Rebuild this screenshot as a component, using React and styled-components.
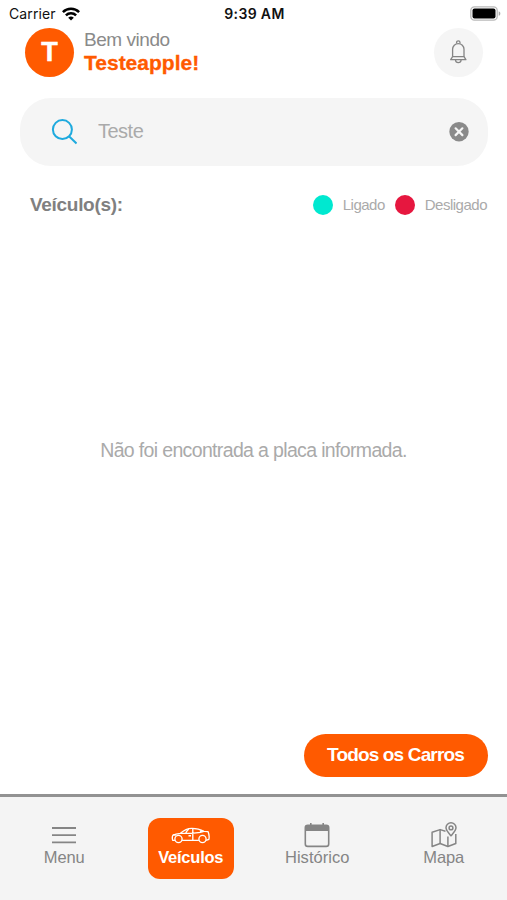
import styled, { createGlobalStyle } from "styled-components";

const GlobalStyle = createGlobalStyle`
    * {
        box-sizing: border-box;
    }

    body {
        margin: 0;
        background: #fff;
        font-family: "Liberation Sans", Arial, sans-serif;
    }
`

const App = () => {
    return (
        <Screen>
            <GlobalStyle />
            <StatusBar>
                <Carrier>
                    Carrier
                    <WifiIcon />
                </Carrier>
                <Clock>9:39 AM</Clock>
                <BatterySlot>
                    <BatteryIcon />
                </BatterySlot>
            </StatusBar>
            <Header>
                <Avatar>T</Avatar>
                <Greeting>
                    <Welcome>Bem vindo</Welcome>
                    <UserName>Testeapple!</UserName>
                </Greeting>
                <BellButton aria-label="Notificações">
                    <BellIcon />
                </BellButton>
            </Header>
            <SearchBox>
                <SearchIcon />
                <SearchInput type="text" defaultValue="Teste" />
                <ClearButton aria-label="Limpar">
                    <ClearIcon />
                </ClearButton>
            </SearchBox>
            <ListHeader>
                <ListTitle>Veículo(s):</ListTitle>
                <Legend>
                    <Dot $color="#00e8d0" />
                    <LegendLabel>Ligado</LegendLabel>
                    <Dot $color="#e6173f" />
                    <LegendLabel>Desligado</LegendLabel>
                </Legend>
            </ListHeader>
            <Empty>Não foi encontrada a placa informada.</Empty>
            <Actions>
                <AllCars>Todos os Carros</AllCars>
            </Actions>
            <TabBar>
                <Tab>
                    <MenuIcon />
                    <TabLabel $spacing="-0.1px">Menu</TabLabel>
                </Tab>
                <Tab $active>
                    <CarIcon />
                    <TabLabel $spacing="-0.25px">Veículos</TabLabel>
                </Tab>
                <Tab>
                    <CalendarIcon />
                    <TabLabel $spacing="0.05px">Histórico</TabLabel>
                </Tab>
                <Tab>
                    <MapIcon />
                    <TabLabel $spacing="-0.1px">Mapa</TabLabel>
                </Tab>
            </TabBar>
        </Screen>
    )
}

const WifiIcon = () => (
    <svg width="18" height="14" viewBox="0 0 18 14" fill="none" stroke="#000" strokeWidth="2.5">
        <path d="M.9 5.2a11.5 11.5 0 0 1 16.2 0" />
        <path d="M3.9 8.4a7.2 7.2 0 0 1 10.2 0" />
        <path d="M9 13.6 6.2 10.8a4 4 0 0 1 5.6 0Z" fill="#000" stroke="none" />
    </svg>
)

const BatteryIcon = () => (
    <svg width="31" height="15" viewBox="0 0 31 15">
        <rect x=".8" y=".8" width="26.4" height="13.4" rx="3.6" fill="#fff" stroke="#b9b9b9" strokeWidth="1.3" />
        <rect x="2.5" y="2.6" width="23" height="9.8" rx="2" fill="#000" />
        <path d="M28.7 5.2c2.2.8 2.2 3.8 0 4.6Z" fill="#aaa" />
    </svg>
)

const BellIcon = () => (
    <svg width="18" height="24" viewBox="0 0 18 24" fill="none" stroke="#858585" strokeWidth="1.3">
        <path d="M6.600 3.600V2.500a1.700 1.700 0 0 1 3.400 0v1.100" />
        <path d="M2.600 16.700V9.300a5.700 5.700 0 0 1 11.400 0v7.400" />
        <path d="M2.600 16.700H14l1.900 3H.7Z" strokeLinejoin="round" />
        <path d="M5.500 20c.3 3.500 5.300 3.500 5.600 0" />
    </svg>
)

const SearchIcon = () => (
    <svg width="26" height="26" viewBox="0 0 26 26" fill="none" stroke="#1eaade" strokeWidth="2">
        <circle cx="11.400" cy="10.600" r="9.500" />
        <path d="m18 17.300 7.500 7.200" />
    </svg>
)

const ClearIcon = () => (
    <svg width="20" height="20" viewBox="0 0 20 20">
        <circle cx="10" cy="9.700" r="9.700" fill="#8a8a8a" />
        <path d="m6.600 6.300 6.800 6.800m0-6.800-6.800 6.800" stroke="#f5f5f5" strokeWidth="2.200" strokeLinecap="round" />
    </svg>
)

const MenuIcon = () => (
    <svg width="26" height="26" viewBox="0 0 26 26" stroke="#858585" strokeWidth="1.800">
        <path d="M1 6h24M1 13.200h24M1 20.400h24" />
    </svg>
)

const CarIcon = () => (
    <svg width="40" height="26" viewBox="0 0 40 26" fill="none" stroke="#fff" strokeWidth="1.350" strokeLinejoin="round">
        <circle cx="7.500" cy="17" r="3.600" />
        <circle cx="31.500" cy="17" r="3.600" />
        <path d="M3.900 18.300H1.700c-.6-2-.5-4 .3-5.300 2.300-1 5-1.400 7.500-1.700 3-2.900 6.100-5 11.400-5 5.300 0 8.700 1.100 12 3l4.200.4c1 2.500 1.400 4.800.8 7.600l-2.800 1M11.100 18.300h16.800" />
        <path d="M9.500 11.300c8.500.3 16.500.2 23.400-2M21.800 6.300v12M14.700 11.200c.7-1.800 1.700-3 3-4.300M29.200 10.500l1-2.200M17.500 13.700H20" />
        <path d="M2 13h3" />
    </svg>
)

const CalendarIcon = () => (
    <svg width="26" height="26" viewBox="0 0 26 26" fill="none" stroke="#858585" strokeWidth="1.600">
        <rect x="1.300" y="3.200" width="23.400" height="21.200" rx="2.500" />
        <path d="M1.300 8.900V5.700a2.500 2.500 0 0 1 2.500-2.500h18.400a2.500 2.500 0 0 1 2.500 2.500v3.200Z" fill="#858585" stroke="none" />
        <path d="M6.800 1v3M19.200 1v3" />
    </svg>
)

const MapIcon = () => (
    <svg width="26" height="26" viewBox="0 0 26 26" fill="none" stroke="#858585" strokeWidth="1.500" strokeLinejoin="round">
        <path d="M14.500 9.200 9.100 7.600 1.100 10.200v14.300l8-3 7.800 3 7.900-3V12" />
        <path d="M9.100 7.600v13.900M16.900 14.500v10" />
        <path d="M20 13.800c-2.700-3.300-5-5.500-5-8a5 5 0 0 1 10 0c0 2.500-2.300 4.700-5 8Z" />
        <circle cx="20" cy="5.900" r="1.900" />
    </svg>
)

const Screen = styled.main`
    display: flex;
    flex-direction: column;
    width: 100%;
    height: 900px;
    background: #fff;
    overflow: hidden;
`

const StatusBar = styled.div`
    display: grid;
    grid-template-columns: 1fr auto 1fr;
    align-items: center;
    height: 27px;
    padding: 0 6px 0 8px;
    font-family: Inter, sans-serif;
    font-size: 14px;
    color: #111;
`

const Carrier = styled.div`
    display: flex;
    align-items: center;
    gap: 6px;
    padding-left: 1px;
    letter-spacing: 0.1px;
`

const Clock = styled.div`
    font-weight: 600;
    letter-spacing: 0.35px;
`

const BatterySlot = styled.div`
    display: flex;
    justify-content: flex-end;
    padding-bottom: 1px;
`

const Header = styled.header`
    display: flex;
    align-items: center;
    height: 50px;
    padding: 0 24px 0 25px;
`

const Avatar = styled.div`
    display: flex;
    align-items: center;
    justify-content: center;
    width: 49px;
    height: 49px;
    border-radius: 50%;
    background: #ff5a00;
    color: #fff;
    font-size: 27px;
    font-weight: bold;
    -webkit-text-stroke: 0.5px #fff;
`

const Greeting = styled.div`
    flex: 1;
    padding: 0 0 2px 10px;
    white-space: nowrap;
`

const Welcome = styled.div`
    font-size: 19px;
    line-height: 23px;
    letter-spacing: -0.45px;
    color: #8a8a8a;
`

const UserName = styled.div`
    font-size: 21px;
    line-height: 24px;
    font-weight: bold;
    color: #ff5a00;
    -webkit-text-stroke: 0.3px #ff5a00;
`

const BellButton = styled.button`
    display: flex;
    align-items: center;
    justify-content: center;
    width: 49px;
    height: 49px;
    padding: 0;
    border: none;
    border-radius: 50%;
    background: #f5f5f5;
`

const SearchBox = styled.div`
    display: flex;
    align-items: center;
    height: 68px;
    margin: 21px 19px 0 20px;
    padding: 0 19px 0 31px;
    border-radius: 31px;
    background: #f5f5f5;
`

const SearchInput = styled.input`
    flex: 1;
    min-width: 0;
    margin-left: 21px;
    padding: 0 0 2px;
    border: none;
    outline: none;
    background: none;
    font-family: inherit;
    font-size: 20px;
    letter-spacing: -0.5px;
    color: #aaa;
`

const ClearButton = styled.button`
    display: flex;
    padding: 0;
    border: none;
    background: none;
`

const ListHeader = styled.div`
    display: flex;
    align-items: center;
    justify-content: space-between;
    height: 40px;
    margin-top: 19px;
    padding: 0 20px 0 30px;
`

const ListTitle = styled.h2`
    margin: 0;
    font-size: 19px;
    letter-spacing: -0.3px;
    color: #808080;
`

const Legend = styled.div`
    display: flex;
    align-items: center;
    gap: 10px;
`

const Dot = styled.span`
    width: 20px;
    height: 20px;
    border-radius: 50%;
    background: ${({ $color }) => $color};
`

const LegendLabel = styled.span`
    padding-bottom: 2px;
    font-size: 15px;
    letter-spacing: -0.5px;
    color: #aaa;
`

const Empty = styled.div`
    display: flex;
    flex: 1;
    align-items: center;
    justify-content: center;
    padding-bottom: 59px;
    font-size: 19.5px;
    letter-spacing: -0.65px;
    white-space: nowrap;
    color: #aaa;
`

const Actions = styled.div`
    display: flex;
    justify-content: flex-end;
    padding: 0 19px 17px 0;
`

const AllCars = styled.button`
    width: 184px;
    height: 43px;
    padding: 0 1px 1px 0;
    border: none;
    border-radius: 22px;
    background: #ff5a00;
    color: #fff;
    font-family: inherit;
    font-size: 19px;
    font-weight: bold;
    letter-spacing: -0.85px;
`

const TabBar = styled.nav`
    display: grid;
    grid-template-columns: repeat(4, 1fr);
    justify-items: center;
    height: 106px;
    padding: 21px 0 0 1px;
    border-top: 3px solid #929292;
    background: #f4f4f4;
`

const Tab = styled.div`
    display: flex;
    flex-direction: column;
    align-items: center;
    width: 86px;
    height: 61px;
    padding-top: 4px;
    border-radius: 12px;
    background: ${({ $active }) => ($active ? "#ff5a00" : "transparent")};
    color: ${({ $active }) => ($active ? "#fff" : "#858585")};
    font-weight: ${({ $active }) => ($active ? "bold" : "normal")};
`

const TabLabel = styled.span`
    font-size: 16.5px;
    line-height: 18px;
    letter-spacing: ${({ $spacing }) => $spacing};
`

export default App;
